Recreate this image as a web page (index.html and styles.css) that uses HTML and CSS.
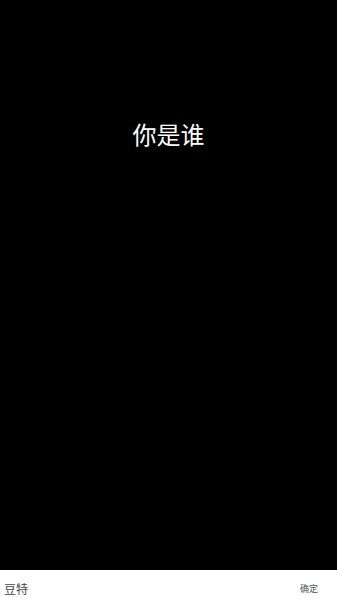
FILE: index.html
```html
<!DOCTYPE html>
<html lang="zh">
<head>
<meta charset="utf-8">
<link rel="stylesheet" href="styles.css">
</head>
<body>
<div class="screen">
  <main class="stage">
    <h1 class="question">你是谁</h1>
  </main>
  <footer class="bar">
    <span class="name">豆特</span>
    <span class="confirm">确定</span>
  </footer>
</div>
</body>
</html>
```
FILE: styles.css
```css
html, body {
  margin: 0;
  padding: 0;
  background: #000;
}
.screen {
  width: 337px;
  height: 606px;
  display: flex;
  flex-direction: column;
  font-family: "Noto Sans CJK SC", "Noto Sans", sans-serif;
}
.stage {
  flex: 1;
  background: #000;
  display: flex;
  flex-direction: column;
  align-items: center;
}
.question {
  margin: 117px 0 0;
  font-size: 24px;
  font-weight: normal;
  line-height: 34px;
  color: #fff;
}
.bar {
  height: 36px;
  background: #fff;
  display: flex;
  align-items: center;
  justify-content: space-between;
  padding: 0 19px 0 4px;
}
.name {
  font-size: 12px;
  color: #444;
}
.confirm {
  font-size: 9px;
  color: #555;
}
```
